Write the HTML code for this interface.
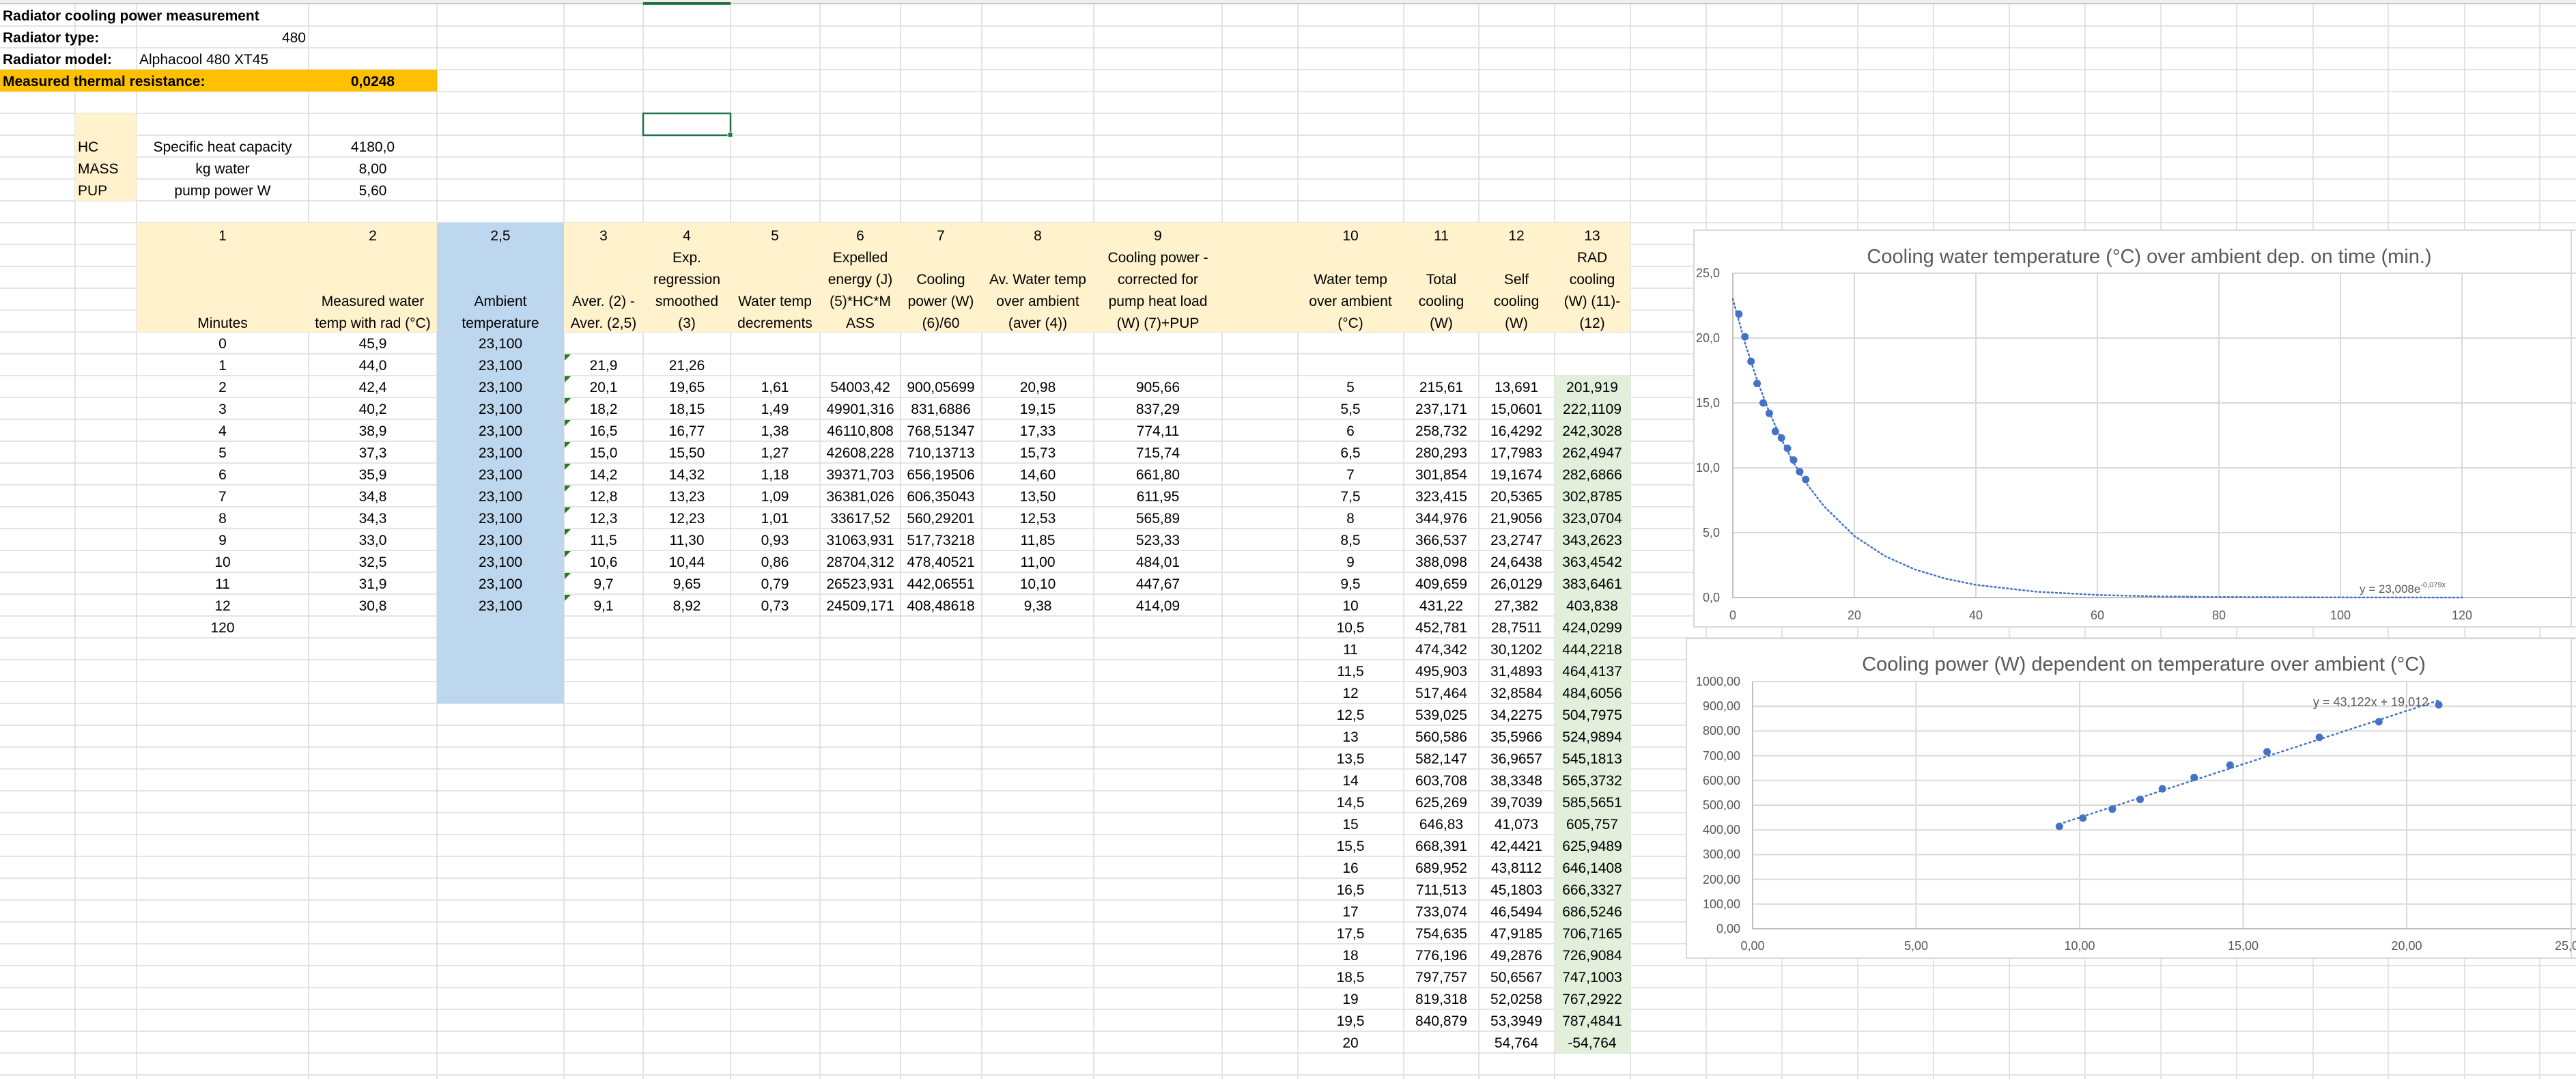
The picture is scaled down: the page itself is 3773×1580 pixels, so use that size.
<!DOCTYPE html>
<html><head><meta charset="utf-8"><style>
html,body{margin:0;padding:0;background:#fff;}
svg{display:block;}
.t{font-family:"Liberation Sans",sans-serif;font-size:21px;fill:#000;}
.c{text-anchor:middle;}
.b{font-weight:bold;}
.ax{font-family:"Liberation Sans",sans-serif;font-size:18px;fill:#595959;}
.ti{font-family:"Liberation Sans",sans-serif;font-size:29px;fill:#595959;text-anchor:middle;}
</style></head><body>
<svg width="3773" height="1580" viewBox="0 0 3773 1580" xmlns="http://www.w3.org/2000/svg">
<rect x="0" y="0" width="3773" height="1580" fill="#fff"/>
<!-- gridlines -->
<g stroke="#dcdcdc" stroke-width="1.5">
<line x1="110" y1="6" x2="110" y2="1580"/><line x1="200" y1="6" x2="200" y2="1580"/><line x1="452" y1="6" x2="452" y2="1580"/><line x1="640" y1="6" x2="640" y2="1580"/><line x1="826" y1="6" x2="826" y2="1580"/><line x1="942" y1="6" x2="942" y2="1580"/><line x1="1070" y1="6" x2="1070" y2="1580"/><line x1="1201" y1="6" x2="1201" y2="1580"/><line x1="1319" y1="6" x2="1319" y2="1580"/><line x1="1438" y1="6" x2="1438" y2="1580"/><line x1="1602" y1="6" x2="1602" y2="1580"/><line x1="1790" y1="6" x2="1790" y2="1580"/><line x1="1901" y1="6" x2="1901" y2="1580"/><line x1="2056" y1="6" x2="2056" y2="1580"/><line x1="2166" y1="6" x2="2166" y2="1580"/><line x1="2277" y1="6" x2="2277" y2="1580"/><line x1="2388" y1="6" x2="2388" y2="1580"/><line x1="2499" y1="6" x2="2499" y2="1580"/><line x1="2610" y1="6" x2="2610" y2="1580"/><line x1="2721" y1="6" x2="2721" y2="1580"/><line x1="2832" y1="6" x2="2832" y2="1580"/><line x1="2943" y1="6" x2="2943" y2="1580"/><line x1="3054" y1="6" x2="3054" y2="1580"/><line x1="3165" y1="6" x2="3165" y2="1580"/><line x1="3276" y1="6" x2="3276" y2="1580"/><line x1="3388" y1="6" x2="3388" y2="1580"/><line x1="3498" y1="6" x2="3498" y2="1580"/><line x1="3610" y1="6" x2="3610" y2="1580"/><line x1="3720" y1="6" x2="3720" y2="1580"/>
<line x1="0" y1="38" x2="3773" y2="38"/><line x1="0" y1="70" x2="3773" y2="70"/><line x1="0" y1="102" x2="3773" y2="102"/><line x1="0" y1="134" x2="3773" y2="134"/><line x1="0" y1="166" x2="3773" y2="166"/><line x1="0" y1="198" x2="3773" y2="198"/><line x1="0" y1="230" x2="3773" y2="230"/><line x1="0" y1="262" x2="3773" y2="262"/><line x1="0" y1="294" x2="3773" y2="294"/><line x1="0" y1="326" x2="3773" y2="326"/><line x1="0" y1="358" x2="3773" y2="358"/><line x1="0" y1="390" x2="3773" y2="390"/><line x1="0" y1="422" x2="3773" y2="422"/><line x1="0" y1="454" x2="3773" y2="454"/><line x1="0" y1="486" x2="3773" y2="486"/><line x1="0" y1="518" x2="3773" y2="518"/><line x1="0" y1="550" x2="3773" y2="550"/><line x1="0" y1="582" x2="3773" y2="582"/><line x1="0" y1="614" x2="3773" y2="614"/><line x1="0" y1="646" x2="3773" y2="646"/><line x1="0" y1="678" x2="3773" y2="678"/><line x1="0" y1="710" x2="3773" y2="710"/><line x1="0" y1="742" x2="3773" y2="742"/><line x1="0" y1="774" x2="3773" y2="774"/><line x1="0" y1="806" x2="3773" y2="806"/><line x1="0" y1="838" x2="3773" y2="838"/><line x1="0" y1="870" x2="3773" y2="870"/><line x1="0" y1="902" x2="3773" y2="902"/><line x1="0" y1="934" x2="3773" y2="934"/><line x1="0" y1="966" x2="3773" y2="966"/><line x1="0" y1="998" x2="3773" y2="998"/><line x1="0" y1="1030" x2="3773" y2="1030"/><line x1="0" y1="1062" x2="3773" y2="1062"/><line x1="0" y1="1094" x2="3773" y2="1094"/><line x1="0" y1="1126" x2="3773" y2="1126"/><line x1="0" y1="1158" x2="3773" y2="1158"/><line x1="0" y1="1190" x2="3773" y2="1190"/><line x1="0" y1="1222" x2="3773" y2="1222"/><line x1="0" y1="1254" x2="3773" y2="1254"/><line x1="0" y1="1286" x2="3773" y2="1286"/><line x1="0" y1="1318" x2="3773" y2="1318"/><line x1="0" y1="1350" x2="3773" y2="1350"/><line x1="0" y1="1382" x2="3773" y2="1382"/><line x1="0" y1="1414" x2="3773" y2="1414"/><line x1="0" y1="1446" x2="3773" y2="1446"/><line x1="0" y1="1478" x2="3773" y2="1478"/><line x1="0" y1="1510" x2="3773" y2="1510"/><line x1="0" y1="1542" x2="3773" y2="1542"/><line x1="0" y1="1574" x2="3773" y2="1574"/>
</g>
<!-- top header bar -->
<rect x="0" y="0" width="3773" height="6" fill="#efefef"/>
<line x1="0" y1="5.5" x2="3773" y2="5.5" stroke="#bdbdbd" stroke-width="1.5"/>
<rect x="942" y="3" width="128" height="4" fill="#217346"/>
<!-- fills -->
<rect x="0" y="102" width="640" height="32" fill="#ffc000"/>
<rect x="110" y="166" width="90" height="128" fill="#fff2cc"/>
<rect x="200" y="326" width="2188" height="160" fill="#fff2cc"/>
<rect x="640" y="326" width="186" height="704" fill="#bdd7ee"/>
<rect x="2277" y="550" width="111" height="992" fill="#e2efda"/>
<!-- selection -->
<rect x="942" y="166" width="128" height="32" fill="none" stroke="#217346" stroke-width="2.5"/>
<rect x="1066" y="194" width="7" height="7" fill="#217346" stroke="#fff" stroke-width="1"/>
<!-- green triangles -->
<g fill="#1e7b1e">
<polygon points="827,519 836,519 827,528"/><polygon points="827,551 836,551 827,560"/><polygon points="827,583 836,583 827,592"/><polygon points="827,615 836,615 827,624"/><polygon points="827,647 836,647 827,656"/><polygon points="827,679 836,679 827,688"/><polygon points="827,711 836,711 827,720"/><polygon points="827,743 836,743 827,752"/><polygon points="827,775 836,775 827,784"/><polygon points="827,807 836,807 827,816"/><polygon points="827,839 836,839 827,848"/><polygon points="827,871 836,871 827,880"/>
</g>
<!-- top text -->
<g class="t">
<text x="4" y="30" class="t b">Radiator cooling power measurement</text>
<text x="4" y="62" class="t b">Radiator type:</text>
<text x="448" y="62" class="t" text-anchor="end">480</text>
<text x="4" y="94" class="t b">Radiator model:</text>
<text x="204" y="94" class="t">Alphacool 480 XT45</text>
<text x="4" y="126" class="t b">Measured thermal resistance:</text>
<text x="546" y="126" class="t b c">0,0248</text>
<text x="114" y="222" class="t">HC</text>
<text x="114" y="254" class="t">MASS</text>
<text x="114" y="286" class="t">PUP</text>
<text x="326" y="222" class="t c">Specific heat capacity</text>
<text x="326" y="254" class="t c">kg water</text>
<text x="326" y="286" class="t c">pump power W</text>
<text x="546" y="222" class="t c">4180,0</text>
<text x="546" y="254" class="t c">8,00</text>
<text x="546" y="286" class="t c">5,60</text>
</g>
<!-- header -->
<g class="t c">
<text x="326" y="352">1</text><text x="546" y="352">2</text><text x="733" y="352">2,5</text><text x="884" y="352">3</text><text x="1006" y="352">4</text><text x="1135" y="352">5</text><text x="1260" y="352">6</text><text x="1378" y="352">7</text><text x="1520" y="352">8</text><text x="1696" y="352">9</text><text x="1978" y="352">10</text><text x="2111" y="352">11</text><text x="2221" y="352">12</text><text x="2332" y="352">13</text>
<text x="326" y="480">Minutes</text>
<text x="546" y="448">Measured water</text><text x="546" y="480">temp with rad (°C)</text>
<text x="733" y="448">Ambient</text><text x="733" y="480">temperature</text>
<text x="884" y="448">Aver. (2) -</text><text x="884" y="480">Aver. (2,5)</text>
<text x="1006" y="384">Exp.</text><text x="1006" y="416">regression</text><text x="1006" y="448">smoothed</text><text x="1006" y="480">(3)</text>
<text x="1135" y="448">Water temp</text><text x="1135" y="480">decrements</text>
<text x="1260" y="384">Expelled</text><text x="1260" y="416">energy (J)</text><text x="1260" y="448">(5)*HC*M</text><text x="1260" y="480">ASS</text>
<text x="1378" y="416">Cooling</text><text x="1378" y="448">power (W)</text><text x="1378" y="480">(6)/60</text>
<text x="1520" y="416">Av. Water temp</text><text x="1520" y="448">over ambient</text><text x="1520" y="480">(aver (4))</text>
<text x="1696" y="384">Cooling power -</text><text x="1696" y="416">corrected for</text><text x="1696" y="448">pump heat load</text><text x="1696" y="480">(W) (7)+PUP</text>
<text x="1978" y="416">Water temp</text><text x="1978" y="448">over ambient</text><text x="1978" y="480">(°C)</text>
<text x="2111" y="416">Total</text><text x="2111" y="448">cooling</text><text x="2111" y="480">(W)</text>
<text x="2221" y="416">Self</text><text x="2221" y="448">cooling</text><text x="2221" y="480">(W)</text>
<text x="2332" y="384">RAD</text><text x="2332" y="416">cooling</text><text x="2332" y="448">(W) (11)-</text><text x="2332" y="480">(12)</text>
</g>
<!-- left data -->
<g class="t c">
<text x="326" y="510">0</text><text x="546" y="510">45,9</text><text x="733" y="510">23,100</text>
<text x="326" y="542">1</text><text x="546" y="542">44,0</text><text x="733" y="542">23,100</text><text x="884" y="542">21,9</text><text x="1006" y="542">21,26</text>
<text x="326" y="574">2</text><text x="546" y="574">42,4</text><text x="733" y="574">23,100</text><text x="884" y="574">20,1</text><text x="1006" y="574">19,65</text><text x="1135" y="574">1,61</text><text x="1260" y="574">54003,42</text><text x="1378" y="574">900,05699</text><text x="1520" y="574">20,98</text><text x="1696" y="574">905,66</text>
<text x="326" y="606">3</text><text x="546" y="606">40,2</text><text x="733" y="606">23,100</text><text x="884" y="606">18,2</text><text x="1006" y="606">18,15</text><text x="1135" y="606">1,49</text><text x="1260" y="606">49901,316</text><text x="1378" y="606">831,6886</text><text x="1520" y="606">19,15</text><text x="1696" y="606">837,29</text>
<text x="326" y="638">4</text><text x="546" y="638">38,9</text><text x="733" y="638">23,100</text><text x="884" y="638">16,5</text><text x="1006" y="638">16,77</text><text x="1135" y="638">1,38</text><text x="1260" y="638">46110,808</text><text x="1378" y="638">768,51347</text><text x="1520" y="638">17,33</text><text x="1696" y="638">774,11</text>
<text x="326" y="670">5</text><text x="546" y="670">37,3</text><text x="733" y="670">23,100</text><text x="884" y="670">15,0</text><text x="1006" y="670">15,50</text><text x="1135" y="670">1,27</text><text x="1260" y="670">42608,228</text><text x="1378" y="670">710,13713</text><text x="1520" y="670">15,73</text><text x="1696" y="670">715,74</text>
<text x="326" y="702">6</text><text x="546" y="702">35,9</text><text x="733" y="702">23,100</text><text x="884" y="702">14,2</text><text x="1006" y="702">14,32</text><text x="1135" y="702">1,18</text><text x="1260" y="702">39371,703</text><text x="1378" y="702">656,19506</text><text x="1520" y="702">14,60</text><text x="1696" y="702">661,80</text>
<text x="326" y="734">7</text><text x="546" y="734">34,8</text><text x="733" y="734">23,100</text><text x="884" y="734">12,8</text><text x="1006" y="734">13,23</text><text x="1135" y="734">1,09</text><text x="1260" y="734">36381,026</text><text x="1378" y="734">606,35043</text><text x="1520" y="734">13,50</text><text x="1696" y="734">611,95</text>
<text x="326" y="766">8</text><text x="546" y="766">34,3</text><text x="733" y="766">23,100</text><text x="884" y="766">12,3</text><text x="1006" y="766">12,23</text><text x="1135" y="766">1,01</text><text x="1260" y="766">33617,52</text><text x="1378" y="766">560,29201</text><text x="1520" y="766">12,53</text><text x="1696" y="766">565,89</text>
<text x="326" y="798">9</text><text x="546" y="798">33,0</text><text x="733" y="798">23,100</text><text x="884" y="798">11,5</text><text x="1006" y="798">11,30</text><text x="1135" y="798">0,93</text><text x="1260" y="798">31063,931</text><text x="1378" y="798">517,73218</text><text x="1520" y="798">11,85</text><text x="1696" y="798">523,33</text>
<text x="326" y="830">10</text><text x="546" y="830">32,5</text><text x="733" y="830">23,100</text><text x="884" y="830">10,6</text><text x="1006" y="830">10,44</text><text x="1135" y="830">0,86</text><text x="1260" y="830">28704,312</text><text x="1378" y="830">478,40521</text><text x="1520" y="830">11,00</text><text x="1696" y="830">484,01</text>
<text x="326" y="862">11</text><text x="546" y="862">31,9</text><text x="733" y="862">23,100</text><text x="884" y="862">9,7</text><text x="1006" y="862">9,65</text><text x="1135" y="862">0,79</text><text x="1260" y="862">26523,931</text><text x="1378" y="862">442,06551</text><text x="1520" y="862">10,10</text><text x="1696" y="862">447,67</text>
<text x="326" y="894">12</text><text x="546" y="894">30,8</text><text x="733" y="894">23,100</text><text x="884" y="894">9,1</text><text x="1006" y="894">8,92</text><text x="1135" y="894">0,73</text><text x="1260" y="894">24509,171</text><text x="1378" y="894">408,48618</text><text x="1520" y="894">9,38</text><text x="1696" y="894">414,09</text>
<text x="326" y="926">120</text>
</g>
<!-- right data -->
<g class="t c">
<text x="1978" y="574">5</text><text x="2111" y="574">215,61</text><text x="2221" y="574">13,691</text><text x="2332" y="574">201,919</text>
<text x="1978" y="606">5,5</text><text x="2111" y="606">237,171</text><text x="2221" y="606">15,0601</text><text x="2332" y="606">222,1109</text>
<text x="1978" y="638">6</text><text x="2111" y="638">258,732</text><text x="2221" y="638">16,4292</text><text x="2332" y="638">242,3028</text>
<text x="1978" y="670">6,5</text><text x="2111" y="670">280,293</text><text x="2221" y="670">17,7983</text><text x="2332" y="670">262,4947</text>
<text x="1978" y="702">7</text><text x="2111" y="702">301,854</text><text x="2221" y="702">19,1674</text><text x="2332" y="702">282,6866</text>
<text x="1978" y="734">7,5</text><text x="2111" y="734">323,415</text><text x="2221" y="734">20,5365</text><text x="2332" y="734">302,8785</text>
<text x="1978" y="766">8</text><text x="2111" y="766">344,976</text><text x="2221" y="766">21,9056</text><text x="2332" y="766">323,0704</text>
<text x="1978" y="798">8,5</text><text x="2111" y="798">366,537</text><text x="2221" y="798">23,2747</text><text x="2332" y="798">343,2623</text>
<text x="1978" y="830">9</text><text x="2111" y="830">388,098</text><text x="2221" y="830">24,6438</text><text x="2332" y="830">363,4542</text>
<text x="1978" y="862">9,5</text><text x="2111" y="862">409,659</text><text x="2221" y="862">26,0129</text><text x="2332" y="862">383,6461</text>
<text x="1978" y="894">10</text><text x="2111" y="894">431,22</text><text x="2221" y="894">27,382</text><text x="2332" y="894">403,838</text>
<text x="1978" y="926">10,5</text><text x="2111" y="926">452,781</text><text x="2221" y="926">28,7511</text><text x="2332" y="926">424,0299</text>
<text x="1978" y="958">11</text><text x="2111" y="958">474,342</text><text x="2221" y="958">30,1202</text><text x="2332" y="958">444,2218</text>
<text x="1978" y="990">11,5</text><text x="2111" y="990">495,903</text><text x="2221" y="990">31,4893</text><text x="2332" y="990">464,4137</text>
<text x="1978" y="1022">12</text><text x="2111" y="1022">517,464</text><text x="2221" y="1022">32,8584</text><text x="2332" y="1022">484,6056</text>
<text x="1978" y="1054">12,5</text><text x="2111" y="1054">539,025</text><text x="2221" y="1054">34,2275</text><text x="2332" y="1054">504,7975</text>
<text x="1978" y="1086">13</text><text x="2111" y="1086">560,586</text><text x="2221" y="1086">35,5966</text><text x="2332" y="1086">524,9894</text>
<text x="1978" y="1118">13,5</text><text x="2111" y="1118">582,147</text><text x="2221" y="1118">36,9657</text><text x="2332" y="1118">545,1813</text>
<text x="1978" y="1150">14</text><text x="2111" y="1150">603,708</text><text x="2221" y="1150">38,3348</text><text x="2332" y="1150">565,3732</text>
<text x="1978" y="1182">14,5</text><text x="2111" y="1182">625,269</text><text x="2221" y="1182">39,7039</text><text x="2332" y="1182">585,5651</text>
<text x="1978" y="1214">15</text><text x="2111" y="1214">646,83</text><text x="2221" y="1214">41,073</text><text x="2332" y="1214">605,757</text>
<text x="1978" y="1246">15,5</text><text x="2111" y="1246">668,391</text><text x="2221" y="1246">42,4421</text><text x="2332" y="1246">625,9489</text>
<text x="1978" y="1278">16</text><text x="2111" y="1278">689,952</text><text x="2221" y="1278">43,8112</text><text x="2332" y="1278">646,1408</text>
<text x="1978" y="1310">16,5</text><text x="2111" y="1310">711,513</text><text x="2221" y="1310">45,1803</text><text x="2332" y="1310">666,3327</text>
<text x="1978" y="1342">17</text><text x="2111" y="1342">733,074</text><text x="2221" y="1342">46,5494</text><text x="2332" y="1342">686,5246</text>
<text x="1978" y="1374">17,5</text><text x="2111" y="1374">754,635</text><text x="2221" y="1374">47,9185</text><text x="2332" y="1374">706,7165</text>
<text x="1978" y="1406">18</text><text x="2111" y="1406">776,196</text><text x="2221" y="1406">49,2876</text><text x="2332" y="1406">726,9084</text>
<text x="1978" y="1438">18,5</text><text x="2111" y="1438">797,757</text><text x="2221" y="1438">50,6567</text><text x="2332" y="1438">747,1003</text>
<text x="1978" y="1470">19</text><text x="2111" y="1470">819,318</text><text x="2221" y="1470">52,0258</text><text x="2332" y="1470">767,2922</text>
<text x="1978" y="1502">19,5</text><text x="2111" y="1502">840,879</text><text x="2221" y="1502">53,3949</text><text x="2332" y="1502">787,4841</text>
<text x="1978" y="1534">20</text><text x="2221" y="1534">54,764</text><text x="2332" y="1534">-54,764</text>
</g>

<!-- CHART 1 -->
<rect x="2481" y="337" width="1300" height="581" fill="#fff" stroke="#d9d9d9" stroke-width="2"/>
<text x="3148" y="385" class="ti">Cooling water temperature (°C) over ambient dep. on time (min.)</text>
<g stroke="#d9d9d9" stroke-width="2">
<line x1="2538" y1="400" x2="3773" y2="400"/><line x1="2538" y1="495" x2="3773" y2="495"/><line x1="2538" y1="590" x2="3773" y2="590"/><line x1="2538" y1="685" x2="3773" y2="685"/><line x1="2538" y1="780" x2="3773" y2="780"/>
<line x1="2716" y1="400" x2="2716" y2="875"/><line x1="2894" y1="400" x2="2894" y2="875"/><line x1="3072" y1="400" x2="3072" y2="875"/><line x1="3250" y1="400" x2="3250" y2="875"/><line x1="3428" y1="400" x2="3428" y2="875"/><line x1="3606" y1="400" x2="3606" y2="875"/>
</g>
<g stroke="#bfbfbf" stroke-width="2"><line x1="2538" y1="400" x2="2538" y2="876"/><line x1="2538" y1="875" x2="3773" y2="875"/></g>
<line x1="3766" y1="337" x2="3766" y2="918" stroke="#d9d9d9" stroke-width="2"/>
<g class="ax" text-anchor="end">
<text x="2519" y="406">25,0</text><text x="2519" y="501">20,0</text><text x="2519" y="596">15,0</text><text x="2519" y="691">10,0</text><text x="2519" y="786">5,0</text><text x="2519" y="881">0,0</text>
</g>
<g class="ax" text-anchor="middle">
<text x="2538" y="907">0</text><text x="2716" y="907">20</text><text x="2894" y="907">40</text><text x="3072" y="907">60</text><text x="3250" y="907">80</text><text x="3428" y="907">100</text><text x="3606" y="907">120</text>
</g>
<polyline fill="none" stroke="#4472c4" stroke-width="2.5" stroke-dasharray="2 4" stroke-linecap="round" points="2538,437.8 2555.8,502 2573.6,556.8 2591.4,603.5 2609.2,643.4 2627,677.4 2644.8,706.4 2671.5,741.3 2716,784.8 2760.5,814.2 2805,834 2849.5,847.3 2894,856.4 2983,866.5 3072,871.2 3161,873.4 3250,874.2 3428,874.8 3606,875"/>
<g fill="#4472c4">
<circle cx="2546.9" cy="459.9" r="5.5"/><circle cx="2555.8" cy="493.1" r="5.5"/><circle cx="2564.7" cy="529.2" r="5.5"/><circle cx="2573.6" cy="561.5" r="5.5"/><circle cx="2582.5" cy="590" r="5.5"/><circle cx="2591.4" cy="605.2" r="5.5"/><circle cx="2600.3" cy="631.8" r="5.5"/><circle cx="2609.2" cy="641.3" r="5.5"/><circle cx="2618.1" cy="656.5" r="5.5"/><circle cx="2627" cy="673.6" r="5.5"/><circle cx="2635.9" cy="690.7" r="5.5"/><circle cx="2644.8" cy="702.1" r="5.5"/>
</g>
<text x="3456" y="868" class="ax" style="font-size:17px">y = 23,008e<tspan dy="-8" style="font-size:11px">-0,079x</tspan></text>

<!-- CHART 2 -->
<rect x="2470" y="935" width="1310" height="468" fill="#fff" stroke="#d9d9d9" stroke-width="2"/>
<text x="3140" y="982" class="ti">Cooling power (W) dependent on temperature over ambient (°C)</text>
<g stroke="#d9d9d9" stroke-width="2">
<line x1="2567" y1="998" x2="3773" y2="998"/><line x1="2567" y1="1034.2" x2="3773" y2="1034.2"/><line x1="2567" y1="1070.4" x2="3773" y2="1070.4"/><line x1="2567" y1="1106.6" x2="3773" y2="1106.6"/><line x1="2567" y1="1142.8" x2="3773" y2="1142.8"/><line x1="2567" y1="1179" x2="3773" y2="1179"/><line x1="2567" y1="1215.2" x2="3773" y2="1215.2"/><line x1="2567" y1="1251.4" x2="3773" y2="1251.4"/><line x1="2567" y1="1287.6" x2="3773" y2="1287.6"/><line x1="2567" y1="1323.8" x2="3773" y2="1323.8"/>
<line x1="2806.5" y1="998" x2="2806.5" y2="1360"/><line x1="3046" y1="998" x2="3046" y2="1360"/><line x1="3285.5" y1="998" x2="3285.5" y2="1360"/><line x1="3525" y1="998" x2="3525" y2="1360"/>
</g>
<g stroke="#bfbfbf" stroke-width="2"><line x1="2567" y1="998" x2="2567" y2="1361"/><line x1="2567" y1="1360" x2="3773" y2="1360"/></g>
<line x1="3766" y1="935" x2="3766" y2="1403" stroke="#d9d9d9" stroke-width="2"/>
<g class="ax" text-anchor="end">
<text x="2549" y="1004">1000,00</text><text x="2549" y="1040">900,00</text><text x="2549" y="1076">800,00</text><text x="2549" y="1113">700,00</text><text x="2549" y="1149">600,00</text><text x="2549" y="1185">500,00</text><text x="2549" y="1221">400,00</text><text x="2549" y="1257">300,00</text><text x="2549" y="1294">200,00</text><text x="2549" y="1330">100,00</text><text x="2549" y="1366">0,00</text>
</g>
<g class="ax" text-anchor="middle">
<text x="2567" y="1391">0,00</text><text x="2806.5" y="1391">5,00</text><text x="3046" y="1391">10,00</text><text x="3285.5" y="1391">15,00</text><text x="3525" y="1391">20,00</text><text x="3764.5" y="1391">25,00</text>
</g>
<line x1="3016.3" y1="1206.7" x2="3572" y2="1025.6" stroke="#4472c4" stroke-width="2.5" stroke-dasharray="2 5" stroke-linecap="round"/>
<g fill="#4472c4">
<circle cx="3016.3" cy="1210.1" r="5.5"/><circle cx="3050.8" cy="1197.9" r="5.5"/><circle cx="3093.9" cy="1184.8" r="5.5"/><circle cx="3134.6" cy="1170.6" r="5.5"/><circle cx="3167.2" cy="1155.1" r="5.5"/><circle cx="3213.7" cy="1138.5" r="5.5"/><circle cx="3266.3" cy="1120.4" r="5.5"/><circle cx="3320.5" cy="1100.9" r="5.5"/><circle cx="3397.1" cy="1079.8" r="5.5"/><circle cx="3484.3" cy="1056.9" r="5.5"/><circle cx="3572" cy="1032.1" r="5.5"/>
</g>
<text x="3388" y="1034" class="ax">y = 43,122x + 19,012</text>
</svg>
</body></html>
